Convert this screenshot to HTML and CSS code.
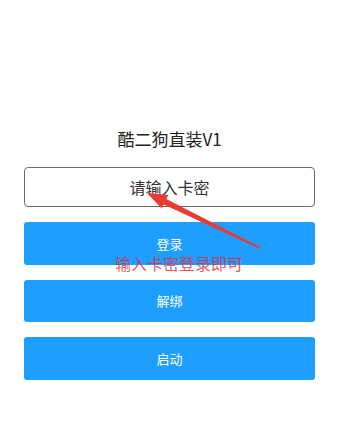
FILE: index.html
```
<!DOCTYPE html>
<html lang="zh">
<head>
<meta charset="utf-8">
<link rel="stylesheet" href="styles.css">
</head>
<body>
<main class="page">
  <h1 class="title">酷二狗直装V1</h1>
  <div class="form">
    <input class="card-input" type="text" placeholder="请输入卡密">
    <button class="btn">登录</button>
    <button class="btn">解绑</button>
    <button class="btn">启动</button>
  </div>
  <svg class="arrow" width="347" height="441" viewBox="0 0 347 441">
    <polygon points="147,193 168.3,195 166.3,199 261,247.6 260,249 163.7,204.4 161.7,208.4" fill="#ec3a35"/>
  </svg>
  <div class="note">输入卡密登录即可</div>
</main>
</body>
</html>
```
FILE: styles.css
```
html, body {
  margin: 0;
  padding: 0;
  background: #fff;
}
body {
  font-family: "Noto Sans CJK SC", "Noto Sans", sans-serif;
}
.page {
  position: relative;
  width: 347px;
  height: 441px;
  padding: 127px 32px 0 24px;
  box-sizing: border-box;
}
.title {
  margin: 0;
  text-align: center;
  font-size: 17px;
  font-weight: 400;
  line-height: 24px;
  color: #222;
}
.form {
  margin-top: 16px;
  display: flex;
  flex-direction: column;
  gap: 15px;
}
.card-input {
  height: 40px;
  box-sizing: border-box;
  border: 1px solid #6b6b6b;
  border-radius: 4px;
  text-align: center;
  font-family: inherit;
  font-size: 16px;
  color: #333;
  padding: 0;
  outline: none;
  background: #fff;
}
.card-input::placeholder {
  color: #333;
}
.btn {
  height: 42.5px;
  border: none;
  border-radius: 3px;
  background: #1e9fff;
  color: #fff;
  font-family: inherit;
  font-size: 13px;
  padding: 0;
}
.arrow {
  position: absolute;
  left: 0;
  top: 0;
  pointer-events: none;
}
.note {
  position: absolute;
  left: 115px;
  top: 252px;
  font-size: 16px;
  line-height: 22px;
  color: rgba(228, 45, 60, 0.82);
  white-space: nowrap;
}
```
